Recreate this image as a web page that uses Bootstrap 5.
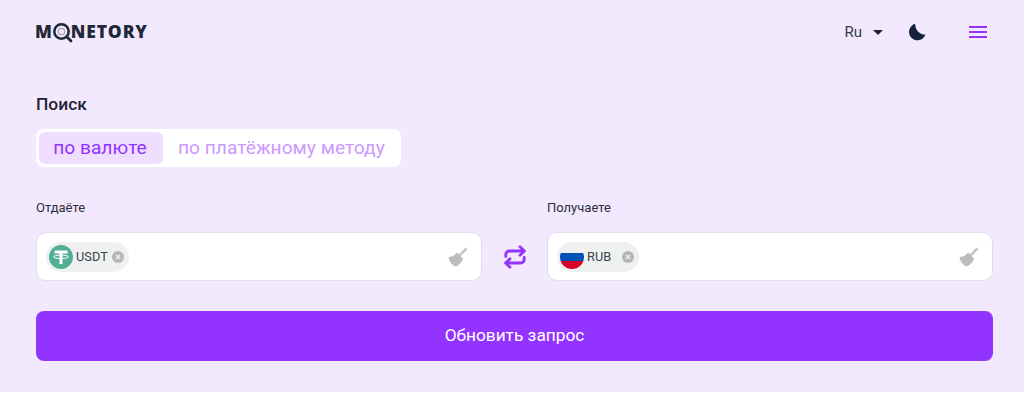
<!DOCTYPE html>
<html lang="en">
<head>
  <meta charset="UTF-8" />
  <meta name="viewport" content="width=device-width, initial-scale=1.0"/>
  <title>Monetory</title>
  <link href="https://cdn.jsdelivr.net/npm/bootstrap@5.3.2/dist/css/bootstrap.min.css" rel="stylesheet">
  <style>
    html, body { height: 412px; overflow: hidden; }
    body { background: #fff; font-family: Roboto, "Liberation Sans", sans-serif; color: #1e2433; }
    .page-wrap { background: #f3e9ff; height: 392px; padding: 0 31px 0 36px; }
    .top-bar { height: 64px; }
    .brand { font-family: "Open Sans", "Liberation Sans", sans-serif; font-weight: 800; font-size: 17.5px; letter-spacing: .85px; color: #1f2937; line-height: 1; margin: 1px 0 0 -1px; }
    .brand svg { margin: 0 -2px 0 0; vertical-align: -5px; }
    .lang-pick { font-size: 15px; color: #353b4a; gap: 11px; }
    .lang-caret { width: 0; height: 0; border-left: 5px solid transparent; border-right: 5px solid transparent; border-top: 5px solid #1e2433; }
    .theme-btn { margin-left: 25px; }
    .menu-btn { margin-left: 43px; margin-right: 6px; }
    .search-title { font-size: 17.4px; font-weight: 500; line-height: 19px; margin-top: 31px; }
    .tab-box { background: #fff; border-radius: 8px; padding: 3px; margin-top: 15px; height: 38px; font-size: 19.2px; line-height: 32px; }
    .tab-on { background: #f0deff; color: #9333ff; border-radius: 6px; width: 124px; padding-right: 2px; text-align: center; }
    .tab-off { color: #cc99ff; padding: 0 13px 0 15px; }
    .pair-row { margin-top: 33px; }
    .pair-col { width: 446px; }
    .swap-col { width: 65px; padding-top: 32px; }
    .field-label { font-size: 13px; line-height: 15px; color: #2a2f3b; margin-bottom: 17px; }
    .field-box { background: #fff; border: 1px solid #e2dbe9; border-radius: 10px; height: 49px; padding: 0 13px 0 9px; }
    .coin-chip { background: #eff1f1; border-radius: 15px; height: 30px; padding: 0 5px 0 3px; font-size: 12.8px; color: #3a3f4c; }
    .coin-chip .chip-name { margin: 0 4px 0 3px; }
    .swap-btn { height: 49px; }
    .go-btn { background: #9333ff; border: 0; border-radius: 8px; height: 50px; margin-top: 30px; font-size: 17.3px; font-weight: 400; color: #fff; }
    .go-btn:hover { background: #9333ff; color: #fff; }
  </style>
</head>
<body>
  <div class="page-wrap">
    <div class="top-bar d-flex align-items-center">
      <div class="brand">M<svg width="20" height="20" viewBox="0 0 20 20"><circle cx="8.500" cy="8.500" r="7.200" fill="none" stroke="#1f2937" stroke-width="2.600"/><circle cx="8.500" cy="8.500" r="3.200" fill="none" stroke="#a3a6b0" stroke-width="1.300"/><path d="M13.500 13.500l4.500 4.500" stroke="#1f2937" stroke-width="2.800" stroke-linecap="round"/></svg>NETORY</div>
      <div class="ms-auto d-flex align-items-center">
        <div class="lang-pick d-flex align-items-center"><span>Ru</span><span class="lang-caret"></span></div>
        <svg class="theme-btn" width="18" height="18" viewBox="0 0 18 18"><path d="M7.200.8A8.400 8.400 0 1 0 17.400 11.600 10 10 0 0 1 7.200.8z" fill="#14213d"/></svg>
        <svg class="menu-btn" width="18" height="14" viewBox="0 0 18 14"><path d="M0 2h18M0 7h18M0 12h18" stroke="#9333ff" stroke-width="2"/></svg>
      </div>
    </div>

    <div class="search-title">Поиск</div>
    <div class="tab-box d-inline-flex">
      <div class="tab-on">по валюте</div>
      <div class="tab-off">по платёжному методу</div>
    </div>

    <div class="pair-row d-flex">
      <div class="pair-col">
        <div class="field-label">Отдаёте</div>
        <div class="field-box d-flex align-items-center justify-content-between">
          <div class="coin-chip d-flex align-items-center">
            <svg width="24" height="24" viewBox="0 0 24 24"><circle cx="12" cy="12" r="12" fill="#50af95"/><path d="M5.500 5.500h13v3h-5v10.500h-3V8.500h-5z" fill="#fff"/><ellipse cx="12" cy="11.800" rx="7.500" ry="1.700" fill="none" stroke="#fff" stroke-width="1"/></svg>
            <span class="chip-name">USDT</span>
            <svg width="12" height="12" viewBox="0 0 12 12"><circle cx="6" cy="6" r="6" fill="#b4b6ba"/><path d="M4 4l4 4M8 4l-4 4" stroke="#eff1f1" stroke-width="1.400"/></svg>
          </div>
          <svg width="20" height="20" viewBox="0 0 20 20"><path d="M18.500 1.500L11 9" stroke="#c6c6c6" stroke-width="2.600"/><path d="M9 5.500l6 6c-1 3.500-3.500 6.500-7 8C4 18.500 1 14 .5 10c3.500 0 6.500-1.500 8.500-4.500z" fill="#bcbcbc"/></svg>
        </div>
      </div>
      <div class="swap-col d-flex justify-content-center">
        <div class="swap-btn d-flex align-items-center">
          <svg width="22" height="24" viewBox="0 0 22 24" fill="none" stroke="#9333ff" stroke-width="2.800" stroke-linecap="round" stroke-linejoin="round"><path d="M16 1.800l4.200 4.200-4.200 4.200"/><path d="M1.800 11.500V9.500A3.500 3.500 0 0 1 5.300 6h14.900"/><path d="M6 22.200L1.800 18 6 13.800"/><path d="M20.200 12.500v2A3.500 3.500 0 0 1 16.700 18H1.800"/></svg>
        </div>
      </div>
      <div class="pair-col">
        <div class="field-label">Получаете</div>
        <div class="field-box d-flex align-items-center justify-content-between">
          <div class="coin-chip d-flex align-items-center">
            <svg width="24" height="24" viewBox="0 0 24 24"><clipPath id="flagClip"><circle cx="12" cy="12" r="12"/></clipPath><g clip-path="url(#flagClip)"><rect width="24" height="8" fill="#f0f0f0"/><rect y="8" width="24" height="8" fill="#0052b4"/><rect y="16" width="24" height="8" fill="#d80027"/></g></svg>
            <span class="chip-name" style="margin-right:11px">RUB</span>
            <svg width="12" height="12" viewBox="0 0 12 12"><circle cx="6" cy="6" r="6" fill="#b4b6ba"/><path d="M4 4l4 4M8 4l-4 4" stroke="#eff1f1" stroke-width="1.400"/></svg>
          </div>
          <svg width="20" height="20" viewBox="0 0 20 20"><path d="M18.500 1.500L11 9" stroke="#c6c6c6" stroke-width="2.600"/><path d="M9 5.500l6 6c-1 3.500-3.500 6.500-7 8C4 18.500 1 14 .5 10c3.500 0 6.500-1.500 8.500-4.500z" fill="#bcbcbc"/></svg>
        </div>
      </div>
    </div>

    <button class="btn go-btn w-100 d-block">Обновить запрос</button>
  </div>
  <script src="https://cdn.jsdelivr.net/npm/bootstrap@5.3.2/dist/js/bootstrap.bundle.min.js"></script>
</body>
</html>
